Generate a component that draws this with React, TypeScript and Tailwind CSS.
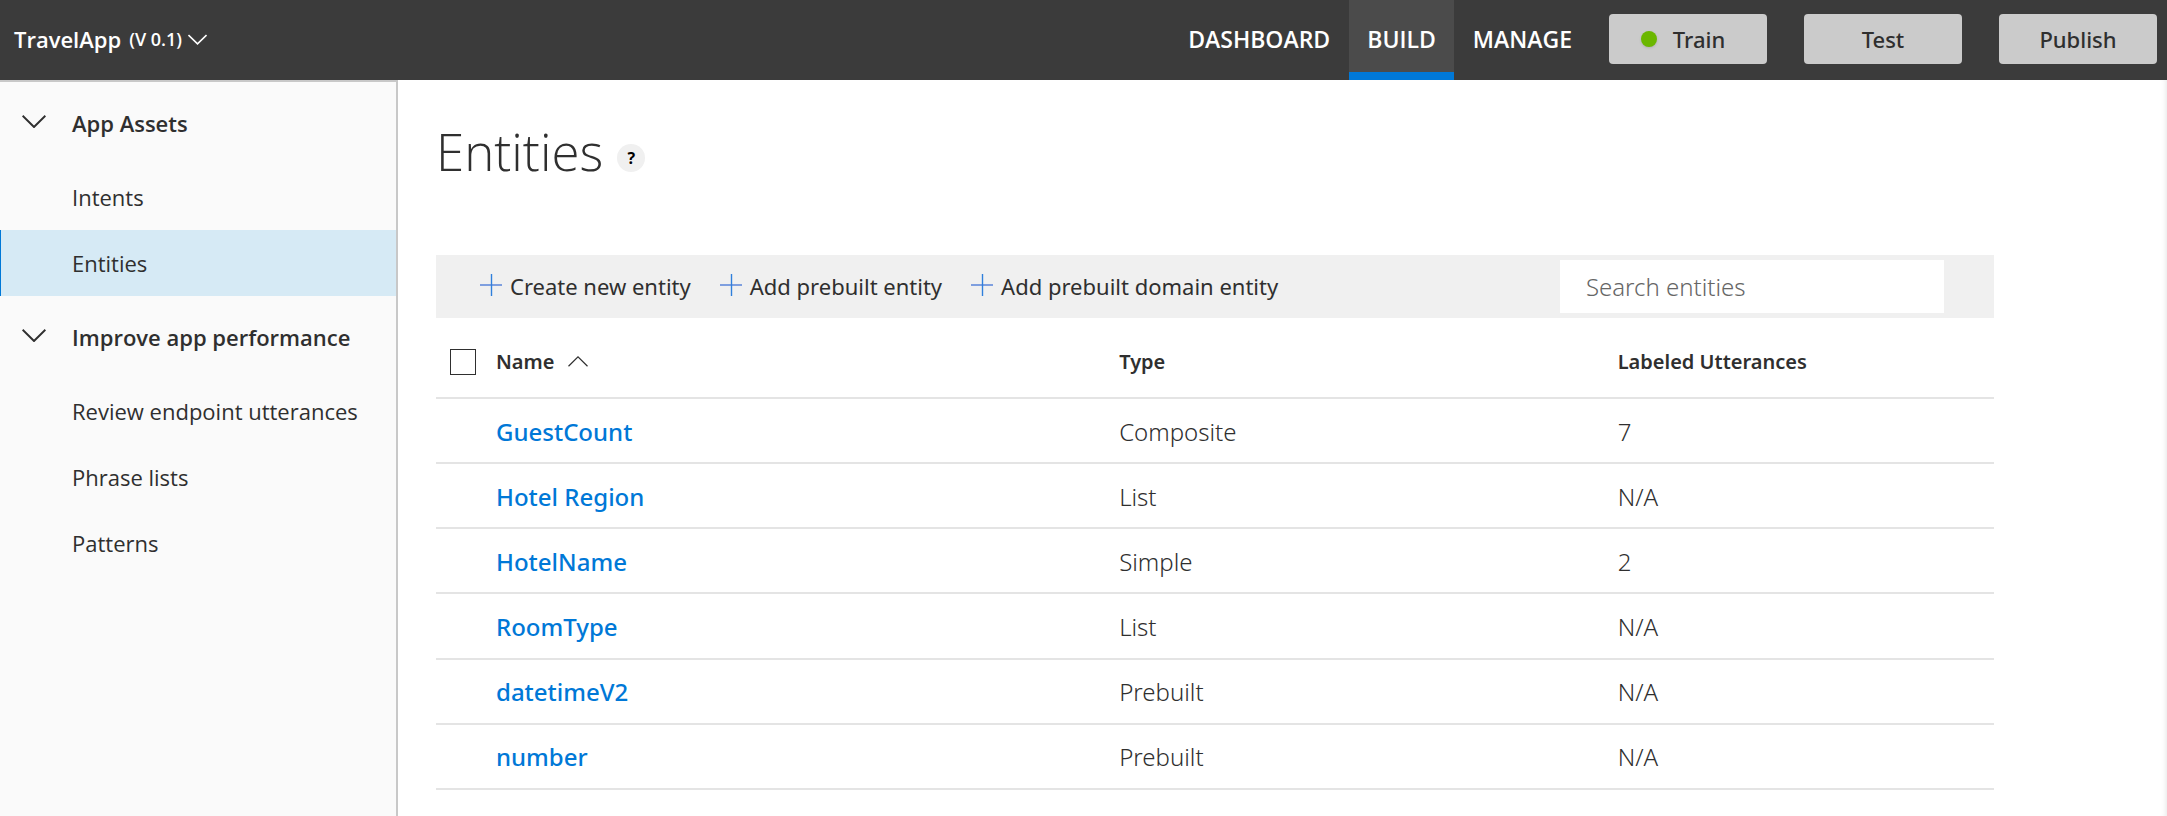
import { useState } from "react";

type Entity = { name: string; type: string; labeled: string };

const entities: Entity[] = [
  { name: "GuestCount", type: "Composite", labeled: "7" },
  { name: "Hotel Region", type: "List", labeled: "N/A" },
  { name: "HotelName", type: "Simple", labeled: "2" },
  { name: "RoomType", type: "List", labeled: "N/A" },
  { name: "datetimeV2", type: "Prebuilt", labeled: "N/A" },
  { name: "number", type: "Prebuilt", labeled: "N/A" },
];

const sections = [
  { title: "App Assets", items: ["Intents", "Entities"] },
  {
    title: "Improve app performance",
    items: ["Review endpoint utterances", "Phrase lists", "Patterns"],
  },
];

const tabs = ["DASHBOARD", "BUILD", "MANAGE"];
const actions = ["Create new entity", "Add prebuilt entity", "Add prebuilt domain entity"];

function Chevron({ className, strokeWidth }: { className: string; strokeWidth: number }) {
  return (
    <svg
      viewBox="0 0 24 13"
      fill="none"
      stroke="currentColor"
      strokeWidth={strokeWidth}
      className={className}
      aria-hidden="true"
    >
      <path d="M0.6 0.8 L12 12 L23.4 0.8" />
    </svg>
  );
}

function Plus() {
  return (
    <svg viewBox="0 0 22 22" className="mb-1 size-[22px] shrink-0" aria-hidden="true">
      <path d="M0 11 H22" stroke="#7f9fdf" strokeWidth="2" />
      <path d="M11.5 0 V22" stroke="#2f7fdc" strokeWidth="1.4" />
    </svg>
  );
}

function TopBar() {
  return (
    <header className="flex h-20 items-center justify-between bg-[#3b3b3b] text-white">
      <button type="button" className="flex items-center pb-0.5 pl-3.5 font-semibold">
        <span className="text-[22px] leading-8">TravelApp</span>
        <span className="ml-2 text-[18px] leading-8">(V 0.1)</span>
        <Chevron className="ml-1.5 h-[11px] w-[19px]" strokeWidth={2} />
      </button>
      <div className="flex h-full items-center">
        <nav className="flex h-full text-[23px] font-semibold">
          {tabs.map((tab) => (
            <a
              key={tab}
              href={"#" + tab.toLowerCase()}
              className={
                tab === "BUILD"
                  ? "flex items-center border-b-8 border-[#0078d7] bg-[#4b4b4b] px-[18px] pt-1.5"
                  : "flex items-center px-[19px] pb-0.5"
              }
            >
              {tab}
            </a>
          ))}
        </nav>
        <div className="mr-2.5 mb-0.5 ml-[18px] flex gap-[37px] font-['Noto_Sans','Open_Sans',sans-serif] text-[22px] font-medium text-[#2f2f2f]">
          <button
            type="button"
            className="flex h-[50px] w-[158px] items-center justify-center gap-4 rounded bg-[#cbcbcb] pr-2.5"
          >
            <span className="size-4 rounded-full bg-[#6bb700] shadow" />
            Train
          </button>
          <button type="button" className="h-[50px] w-[158px] rounded bg-[#cbcbcb]">
            Test
          </button>
          <button type="button" className="h-[50px] w-[158px] rounded bg-[#cbcbcb]">
            Publish
          </button>
        </div>
      </div>
    </header>
  );
}

function Sidebar() {
  return (
    <aside className="w-[398px] shrink-0 border-t-2 border-r-2 border-[#c8c8c8] bg-[#fafafa]">
      {sections.map((section) => (
        <section key={section.title}>
          <button
            type="button"
            className="flex h-[82px] w-full items-center gap-[26px] pl-[22px] text-[22px] font-semibold"
          >
            <Chevron className="mb-1 h-[13px] w-6" strokeWidth={2} />
            {section.title}
          </button>
          <ul>
            {section.items.map((item) => (
              <li key={item}>
                <a
                  href={"#" + item.toLowerCase().replace(/ /g, "-")}
                  className={
                    item === "Entities"
                      ? "flex h-[66px] items-center border-l border-[#0078d7] bg-[#d6eaf5] pl-[71px] text-[22px]"
                      : "flex h-[66px] items-center pl-[72px] text-[22px]"
                  }
                >
                  {item}
                </a>
              </li>
            ))}
          </ul>
        </section>
      ))}
    </aside>
  );
}

function EntityTable() {
  const [all, setAll] = useState(false);
  return (
    <table className="h-[472px] w-full table-fixed border-collapse text-left">
      <thead>
        <tr className="h-20 border-b-2 border-[#e4e4e4] text-[20px]">
          <th className="w-[60px] pt-2 pl-3.5">
            <input
              type="checkbox"
              aria-label="Select all entities"
              checked={all}
              onChange={() => setAll(!all)}
              className="block size-[26px] appearance-none border border-[#2f2f2f] bg-white checked:bg-[#0078d7]"
            />
          </th>
          <th className="w-[40%] pt-2 font-semibold">
            <button type="button" className="flex items-center gap-3.5">
              Name
              <Chevron className="h-[11px] w-5 rotate-180" strokeWidth={1.4} />
            </button>
          </th>
          <th className="w-[32%] pt-2 font-semibold">Type</th>
          <th className="pt-2 font-semibold">Labeled Utterances</th>
        </tr>
      </thead>
      <tbody>
        {entities.map((entity) => (
          <tr key={entity.name} className="border-b-2 border-[#e4e4e4] text-[24px]">
            <td />
            <td className="pt-0.5">
              <a href={"#" + entity.name} className="font-medium text-[#0078d7]">
                {entity.name}
              </a>
            </td>
            <td className="pt-0.5 font-light">{entity.type}</td>
            <td className="pt-0.5 font-light">{entity.labeled}</td>
          </tr>
        ))}
      </tbody>
    </table>
  );
}

export default function App() {
  return (
    <div className="flex min-h-screen flex-col bg-white font-['Open_Sans','Noto_Sans',sans-serif] text-[#2f2f2f]">
      <TopBar />
      <div className="flex flex-1">
        <Sidebar />
        <main className="min-w-0 flex-1 pl-[38px] shadow-[inset_-6px_0_6px_-6px_#dddddd]">
          <div className="flex h-[175px] items-start gap-3.5 pt-[35px]">
            <h1 className="text-[51px] leading-[72px] font-light">Entities</h1>
            <button
              type="button"
              aria-label="Help"
              className="mt-[29px] size-7 rounded-full bg-[#f0f0f0] text-base leading-7 font-bold text-black"
            >
              ?
            </button>
          </div>
          <div className="w-[90%] font-['Noto_Sans','Open_Sans',sans-serif]">
            <div className="flex h-[63px] items-center bg-[#f0f0f0] pr-[50px] pl-11 text-[22px]">
              <div className="flex flex-1 gap-[29px]">
                {actions.map((action) => (
                  <button key={action} type="button" className="flex items-center gap-2">
                    <Plus />
                    {action}
                  </button>
                ))}
              </div>
              <input
                type="search"
                aria-label="Search entities"
                placeholder="Search entities"
                className="h-[53px] w-96 bg-white px-[26px] text-[24px] font-light placeholder:text-[#666666]"
              />
            </div>
            <EntityTable />
          </div>
        </main>
      </div>
    </div>
  );
}
